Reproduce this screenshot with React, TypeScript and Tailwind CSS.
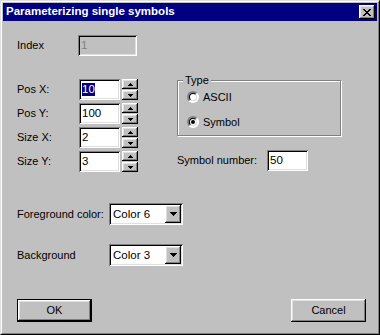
import React from 'react';

const font = "font-['Liberation_Sans',Arial,sans-serif]";
const raised =
  'bg-[#c0c0c0] shadow-[inset_-1px_-1px_0_#000,inset_1px_1px_0_#fff,inset_-2px_-2px_0_#808080,inset_2px_2px_0_#dfdfdf]';
const sunken =
  'shadow-[inset_1px_1px_0_#808080,inset_-1px_-1px_0_#fff,inset_2px_2px_0_#000,inset_-2px_-2px_0_#dfdfdf]';

const Arrow = ({ up }: { up?: boolean }) => (
  <svg width="5" height="3" viewBox="0 0 5 3">
    {up ? <path d="M2 0h1v1h1v1h1v1H0V2h1V1h1z" fill="#000" /> : <path d="M0 0h5v1H4v1H3v1H2V2H1V1H0z" fill="#000" />}
  </svg>
);

const TextBox = ({ value, selected, className = '' }: { value: string; selected?: boolean; className?: string }) => (
  <div className={`h-[21px] bg-white ${sunken} flex items-center pl-[3px] ${className}`}>
    <span className={`text-[11.5px] leading-[13px] ${selected ? 'bg-[#000080] text-white' : 'text-black'}`}>{value}</span>
  </div>
);

const SpinRow = ({ label, value, selected }: { label: string; value: string; selected?: boolean }) => (
  <div className="flex items-center h-[21px]">
    <div className="w-[62px]">{label}</div>
    <TextBox value={value} selected={selected} className="w-[41px]" />
    <div className="ml-[2px] flex flex-col gap-[1px]">
      <div className={`w-[16px] h-[10px] ${raised} flex items-center justify-center`}>
        <Arrow up />
      </div>
      <div className={`w-[16px] h-[10px] ${raised} flex items-center justify-center`}>
        <Arrow />
      </div>
    </div>
  </div>
);

const Radio = ({ label, checked }: { label: string; checked?: boolean }) => (
  <div className="flex items-center h-[12px]">
    <div className="w-[12px] h-[12px] rounded-full border-2 border-t-[#808080] border-l-[#808080] border-b-white border-r-white">
      <div className="w-full h-full rounded-full border border-t-black border-l-black border-b-[#dfdfdf] border-r-[#dfdfdf] bg-white flex items-center justify-center">
        {checked && <div className="w-[4px] h-[4px] rounded-full bg-black" />}
      </div>
    </div>
    <span className="ml-[4px]">{label}</span>
  </div>
);

const Dropdown = ({ value }: { value: string }) => (
  <div className={`w-[74px] h-[22px] bg-white ${sunken} flex items-center pl-[4px] pr-[2px]`}>
    <span className="flex-1 text-[11.5px]">{value}</span>
    <div className={`w-[16px] h-[18px] ${raised} flex items-center justify-center`}>
      <svg width="7" height="4" viewBox="0 0 7 4">
        <path d="M0 0h7v1H6v1H5v1H4v1H3V3H2V2H1V1H0z" fill="#000" />
      </svg>
    </div>
  </div>
);

export default function App() {
  return (
    <div className={`w-[380px] h-[335px] ${font} text-black`}>
      <div className="w-full h-full border border-t-[#dfdfdf] border-l-[#dfdfdf] border-b-black border-r-black">
        <div className="w-full h-full bg-[#c0c0c0] border border-t-white border-l-white border-b-[#808080] border-r-[#808080] p-[1px] flex flex-col">
          {/* title */}
          <div className="h-[18px] bg-[#000080] flex items-center pl-[3px] pr-[2px]">
            <span className="flex-1 text-white font-bold text-[11.5px]">Parameterizing single symbols</span>
            <div className={`w-[16px] h-[14px] ${raised} flex items-center justify-center`}>
              <svg width="8" height="7" viewBox="0 0 8 7">
                <path d="M0 0h2v1h1v1h2V1h1V0h2v1H7v1H6v1H5v1h1v1h1v1h1v1H6V6H5V5H3v1H2v1H0V6h1V5h1V4h1V3H2V2H1V1H0z" fill="#000" />
              </svg>
            </div>
          </div>

          {/* body */}
          <div className="flex-1 flex flex-col pl-[14px] pr-[11px] text-[11px] leading-[13px]">
            <div className="mt-[14px] flex items-center h-[21px]">
              <div className="w-[61px]">Index</div>
              <div className={`w-[59px] h-[21px] bg-[#c0c0c0] ${sunken} flex items-center pl-[3px]`}>
                <span className="text-[#808080] text-[11.5px]">1</span>
              </div>
            </div>

            <div className="mt-[23px] flex">
              <div className="flex flex-col gap-[3px] w-[121px]">
                <SpinRow label="Pos X:" value="10" selected />
                <SpinRow label="Pos Y:" value="100" />
                <SpinRow label="Size X:" value="2" />
                <SpinRow label="Size Y:" value="3" />
              </div>
              <div className="ml-[39px] flex flex-col">
                <div className="mt-[1px] relative w-[164px] h-[56px] border border-[#808080] shadow-[1px_1px_0_#fff,inset_1px_1px_0_#fff] flex flex-col pl-[9px] pt-[10px] gap-[13px]">
                  <span className="absolute -top-[7px] left-[5px] bg-[#c0c0c0] px-[2px]">Type</span>
                  <Radio label="ASCII" />
                  <Radio label="Symbol" checked />
                </div>
                <div className="mt-[14px] flex items-center">
                  <div className="w-[90px]">Symbol number:</div>
                  <TextBox value="50" className="w-[41px]" />
                </div>
              </div>
            </div>

            <div className="mt-[31px] flex items-center">
              <div className="w-[92px]">Foreground color:</div>
              <Dropdown value="Color 6" />
            </div>
            <div className="mt-[19px] flex items-center">
              <div className="w-[92px]">Background</div>
              <Dropdown value="Color 3" />
            </div>

            <div className="mt-[33px] flex justify-between">
              <div className="w-[75px] h-[23px] border border-black">
                <div className={`w-full h-full ${raised} flex items-center justify-center`}>OK</div>
              </div>
              <div className={`w-[75px] h-[23px] ${raised} flex items-center justify-center`}>Cancel</div>
            </div>
          </div>
        </div>
      </div>
    </div>
  );
}
